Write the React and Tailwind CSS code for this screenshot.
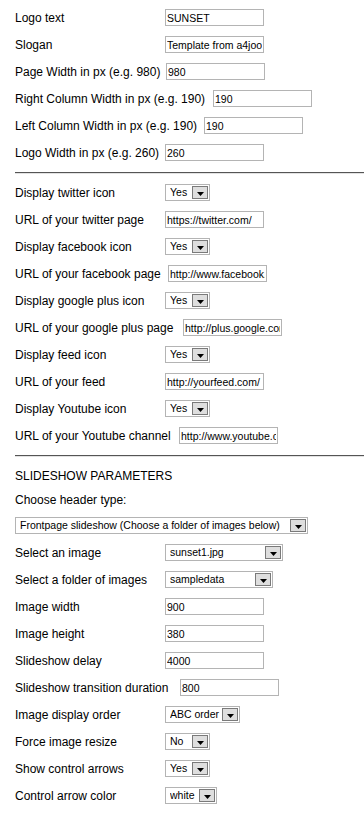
import React from "react";

const Arrow = () => (
  <span className="flex items-center justify-center w-[16px] h-[13px] border border-[#7a7a7a] bg-[#dedede] shrink-0">
    <svg width="7" height="4" viewBox="0 0 7 4" className="mt-[2px]">
      <polygon points="0,0 7,0 3.5,4" fill="#000" />
    </svg>
  </span>
);

const Select = ({ value, w }) => (
  <div className={`flex items-center h-[17px] border border-[#b4b4b4] bg-white pl-[4px] pr-[1px] ${w}`}>
    <span className="flex-1 text-[10.5px] leading-none whitespace-nowrap overflow-hidden text-black">{value}</span>
    <Arrow />
  </div>
);

const Input = ({ value }) => (
  <input
    readOnly
    value={value}
    className="w-[99px] h-[17px] border border-[#b4b4b4] bg-white px-[1px] text-[10.5px] leading-none text-black outline-none"
  />
);

const Row = ({ label, lw = "w-[150px]", children }) => (
  <div className="flex items-center h-[17px]">
    <span className={`${lw} shrink-0 whitespace-nowrap`}>{label}</span>
    {children}
  </div>
);

const Hr = () => (
  <div className="mt-[11px] mb-[10px] h-0 border-t border-b border-t-[#555555] border-b-[#e2e2e2]" />
);

export default function App() {
  return (
    <div className="min-h-screen bg-white pl-[15px] pt-[9px] text-[12px] text-black font-['Liberation_Sans',Arial,sans-serif]">
      <div className="flex flex-col gap-[10px]">
        <Row label="Logo text"><Input value="SUNSET" /></Row>
        <Row label="Slogan"><Input value="Template from a4joomla" /></Row>
        <Row label="Page Width in px (e.g. 980)" lw="w-[151px]"><Input value="980" /></Row>
        <Row label="Right Column Width in px (e.g. 190)" lw="w-[198px]"><Input value="190" /></Row>
        <Row label="Left Column Width in px (e.g. 190)" lw="w-[189px]"><Input value="190" /></Row>
        <Row label="Logo Width in px (e.g. 260)"><Input value="260" /></Row>
      </div>
      <Hr />
      <div className="flex flex-col gap-[10px]">
        <Row label="Display twitter icon"><Select value="Yes" w="w-[45px]" /></Row>
        <Row label="URL of your twitter page"><Input value="https://twitter.com/" /></Row>
        <Row label="Display facebook icon"><Select value="Yes" w="w-[45px]" /></Row>
        <Row label="URL of your facebook page" lw="w-[153px]"><Input value="http://www.facebook.com/" /></Row>
        <Row label="Display google plus icon"><Select value="Yes" w="w-[45px]" /></Row>
        <Row label="URL of your google plus page" lw="w-[168px]"><Input value="http://plus.google.com/" /></Row>
        <Row label="Display feed icon"><Select value="Yes" w="w-[45px]" /></Row>
        <Row label="URL of your feed"><Input value="http://yourfeed.com/" /></Row>
        <Row label="Display Youtube icon"><Select value="Yes" w="w-[45px]" /></Row>
        <Row label="URL of your Youtube channel" lw="w-[164px]"><Input value="http://www.youtube.com/" /></Row>
      </div>
      <Hr />
      <div className="flex flex-col">
        <div className="h-[17px] flex items-center">SLIDESHOW PARAMETERS</div>
        <div className="mt-[7px] h-[17px] flex items-center">Choose header type:</div>
        <div className="mt-[9px]">
          <Select value="Frontpage slideshow (Choose a folder of images below)" w="w-[293px]" />
        </div>
        <div className="mt-[10px] flex flex-col gap-[10px]">
          <Row label="Select an image"><Select value="sunset1.jpg" w="w-[118px]" /></Row>
          <Row label="Select a folder of images"><Select value="sampledata" w="w-[108px]" /></Row>
          <Row label="Image width"><Input value="900" /></Row>
          <Row label="Image height"><Input value="380" /></Row>
          <Row label="Slideshow delay"><Input value="4000" /></Row>
          <Row label="Slideshow transition duration" lw="w-[165px]"><Input value="800" /></Row>
          <Row label="Image display order"><Select value="ABC order" w="w-[75px]" /></Row>
          <Row label="Force image resize"><Select value="No" w="w-[45px]" /></Row>
          <Row label="Show control arrows"><Select value="Yes" w="w-[45px]" /></Row>
          <Row label="Control arrow color"><Select value="white" w="w-[52px]" /></Row>
        </div>
      </div>
    </div>
  );
}
